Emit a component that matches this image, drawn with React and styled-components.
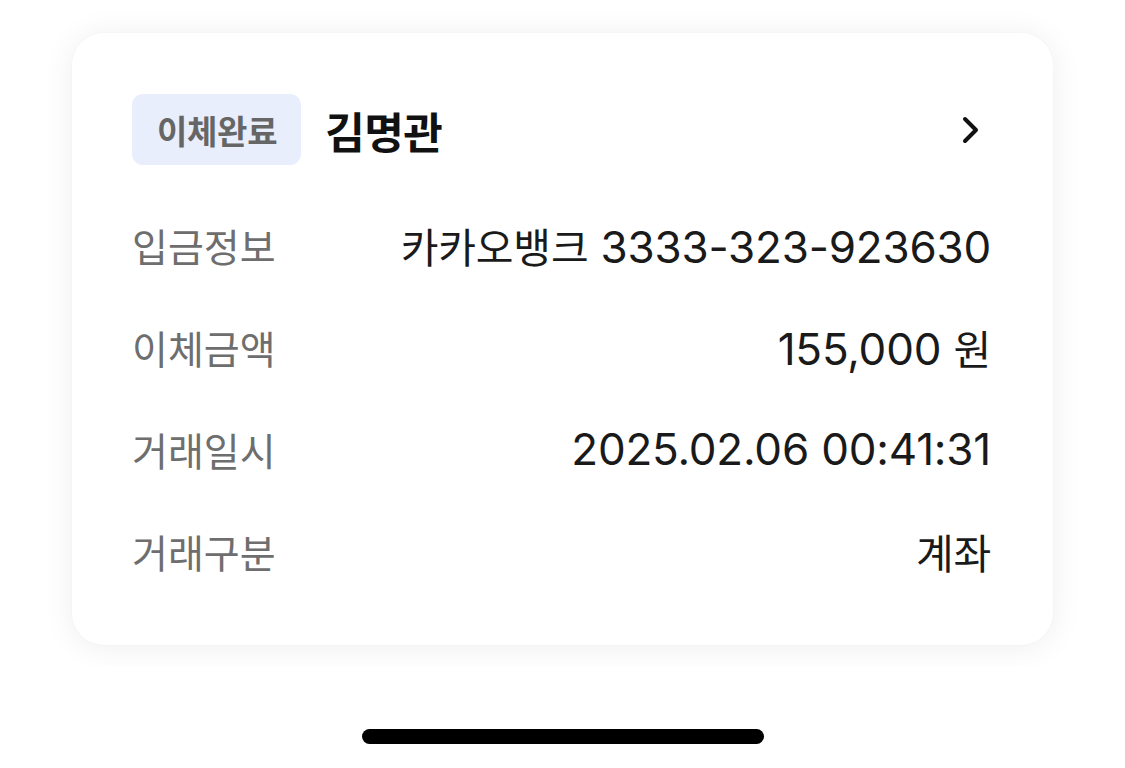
import React from "react";
import styled, { createGlobalStyle } from "styled-components";

const rows = [
	{ label: "입금정보", value: "카카오뱅크 3333-323-923630" },
	{ label: "이체금액", value: "155,000 원" },
	{ label: "거래일시", value: "2025.02.06 00:41:31" },
	{ label: "거래구분", value: "계좌" },
];

// Hangul runs are set a bit smaller so they sit with the wider digits
const splitHangul = (text) =>
	text.split(/([가-힣]+)/).map((part, i) =>
		/[가-힣]/.test(part) ? <Ko key={i}>{part}</Ko> : part,
	);

function App() {
	return (
		<>
			<GlobalStyle />
			<Screen>
				<CardArea>
					<Card>
						<Header>
							<Badge>이체완료</Badge>
							<Name>김명관</Name>
							<Chevron viewBox="0 0 20 30" aria-hidden="true">
								<path
									d="M4 4 L15 15 L4 26"
									fill="none"
									stroke="#111"
									strokeWidth="4"
									strokeLinecap="round"
									strokeLinejoin="round"
								/>
							</Chevron>
						</Header>
						<Rows>
							{rows.map((row) => (
								<Row key={row.label}>
									<Label>{row.label}</Label>
									<Value>{splitHangul(row.value)}</Value>
								</Row>
							))}
						</Rows>
					</Card>
				</CardArea>
				<HomeBar />
			</Screen>
		</>
	);
}

export default App;

const GlobalStyle = createGlobalStyle`
	html, body {
		margin: 0;
		padding: 0;
		background: #fff;
	}
	body {
		font-family: "Inter", "Noto Sans CJK KR", sans-serif;
		-webkit-font-smoothing: antialiased;
	}
`;

const Screen = styled.div`
	width: 1125px;
	height: 768px;
	display: flex;
	flex-direction: column;
	align-items: center;
	background: #fff;
`;

const CardArea = styled.div`
	width: 100%;
	box-sizing: border-box;
	height: 666px;
	padding: 33px 72px 0;
	overflow: hidden;
`;

const Card = styled.div`
	box-sizing: border-box;
	height: 612px;
	background: #fff;
	border-radius: 32px;
	box-shadow: 0 2px 32px rgba(0, 0, 0, 0.07), 0 0 2px rgba(0, 0, 0, 0.04);
	padding: 61px 62px 0 60px;
`;

const Header = styled.div`
	display: flex;
	align-items: center;
	gap: 24px;
	height: 71px;
`;

const Badge = styled.div`
	height: 71px;
	box-sizing: border-box;
	padding: 0 24px 0 25px;
	display: flex;
	align-items: center;
	background: #e9eefc;
	border-radius: 11px;
	color: #666;
	font-size: 33px;
	font-weight: 600;
	letter-spacing: -0.3px;
`;

const Name = styled.div`
	flex: 1;
	color: #111;
	font-size: 43px;
	font-weight: 700;
	letter-spacing: -0.5px;
`;

const Chevron = styled.svg`
	width: 20px;
	height: 30px;
	margin-right: 10px;
`;

const Rows = styled.div`
	display: flex;
	flex-direction: column;
	gap: 58px;
	margin-top: 58px;
`;

const Row = styled.div`
	display: flex;
	align-items: center;
	justify-content: space-between;
	height: 44px;
`;

const Label = styled.div`
	color: #6e6e6e;
	font-size: 39px;
	font-family: "Noto Sans CJK KR", sans-serif;
`;

const Value = styled.div`
	color: #1a1a1a;
	font-size: 44px;
	letter-spacing: -0.2px;
	white-space: nowrap;
`;

const Ko = styled.span`
	font-family: "Noto Sans CJK KR", sans-serif;
	font-size: 41px;
`;

const HomeBar = styled.div`
	margin-top: 63px;
	width: 402px;
	height: 15px;
	border-radius: 8px;
	background: #000;
`;
